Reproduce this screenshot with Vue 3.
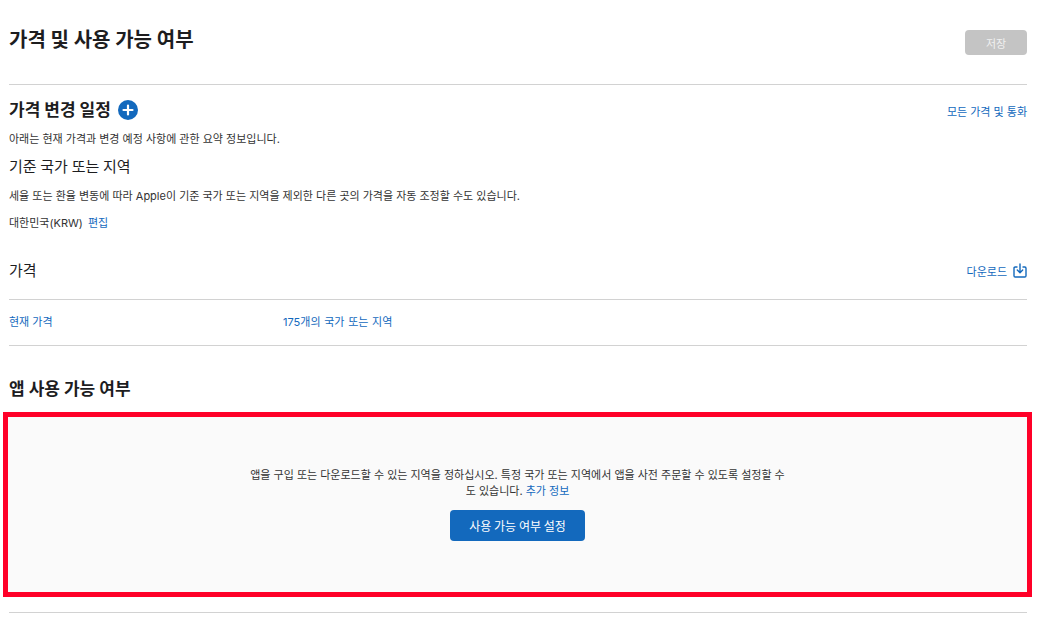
<script setup>
const blue = '#1369bd'
</script>

<template>
  <main class="page">
    <header class="top">
      <h1>가격 및 사용 가능 여부</h1>
      <button class="save" disabled>저장</button>
    </header>
    <section class="schedule">
      <div class="row">
        <h2>가격 변경 일정</h2>
        <svg class="plus" width="20" height="20" viewBox="0 0 20 20">
          <circle cx="10" cy="10" r="10" :fill="blue" />
          <path d="M10 5.500v9M5.500 10h9" stroke="#fff" stroke-width="2.200" stroke-linecap="round" />
        </svg>
        <a class="link push">모든 가격 및 통화</a>
      </div>
      <p class="intro">아래는 현재 가격과 변경 예정 사항에 관한 요약 정보입니다.</p>
      <h3>기준 국가 또는 지역</h3>
      <p class="note">세율 또는 환율 변동에 따라 Apple이 기준 국가 또는 지역을 제외한 다른 곳의 가격을 자동 조정할 수도 있습니다.</p>
      <p class="base">대한민국(KRW) <a class="link edit">편집</a></p>
    </section>
    <section class="prices">
      <div class="row price-head">
        <h3>가격</h3>
        <a class="link push">다운로드</a>
        <svg class="dl" width="14" height="15" viewBox="0 0 14 15" fill="none" :stroke="blue" stroke-width="1.400" stroke-linecap="round" stroke-linejoin="round">
          <path d="M4 4H2.200C1.500 4 1 4.500 1 5.200v7.600c0 .7.500 1.200 1.200 1.200h9.600c.7 0 1.200-.5 1.200-1.200V5.200C13 4.500 12.500 4 11.800 4H10" />
          <path d="M7 1v8.500M4.300 7 7 9.700 9.700 7" />
        </svg>
      </div>
      <div class="current">
        <a class="link col">현재 가격</a>
        <a class="link regions">175개의 국가 또는 지역</a>
      </div>
    </section>
    <h2 class="avail-title">앱 사용 가능 여부</h2>
    <section class="avail">
      <p>앱을 구입 또는 다운로드할 수 있는 지역을 정하십시오. 특정 국가 또는 지역에서 앱을 사전 주문할 수 있도록 설정할 수도 있습니다. <a class="link">추가 정보</a></p>
      <button class="setup">사용 가능 여부 설정</button>
    </section>
    <hr class="end" />
  </main>
</template>

<style scoped>
.page {
  box-sizing: border-box;
  width: 1037px;
  height: 624px;
  padding: 0 10px 0 9px;
  overflow: hidden;
  background: #fff;
  color: #333;
  font-family: Inter, "Noto Sans CJK KR", sans-serif;
  font-size: 11px;
}
h1, h2, h3, p { margin: 0; }
.top {
  display: flex;
  justify-content: space-between;
  height: 84px;
  border-bottom: 1px solid #d2d2d2;
}
h1 {
  margin-top: 25px;
  font-size: 20px;
  line-height: 30px;
  font-weight: 700;
  color: #1d1d1f;
}
.save {
  width: 62px;
  height: 25px;
  margin-top: 30px;
  border: 0;
  border-radius: 4px;
  background: #c4c4c4;
  color: #f0f0f0;
  font: inherit;
}
.row { display: flex; align-items: center; }
.push { margin-left: auto; }
.schedule { padding-top: 15px; }
h2 {
  font-size: 17px;
  line-height: 20px;
  font-weight: 700;
  color: #1d1d1f;
}
.plus { margin-left: 7px; }
.link { color: #1369bd; }
.schedule .link.push { padding-top: 2px; }
.intro { margin-top: 11px; line-height: 16px; }
h3 {
  font-size: 15px;
  line-height: 20px;
  font-weight: 400;
  word-spacing: -0.5px;
  color: #1d1d1f;
}
.schedule h3 { margin-top: 10px; }
.note { margin-top: 11px; line-height: 16px; }
.base { margin-top: 11px; line-height: 16px; }
.edit { margin-left: 2px; }
.prices { margin-top: 25px; }
.price-head { height: 29px; padding-bottom: 14px; border-bottom: 1px solid #d2d2d2; }
.dl { margin-left: 6px; }
.current {
  display: flex;
  height: 46px;
  padding-bottom: 3px;
  box-sizing: border-box;
  align-items: center;
  border-bottom: 1px solid #d2d2d2;
}
.col { width: 274px; }
.regions { word-spacing: 0.6px; }
.avail-title { margin-top: 33px; }
.avail {
  display: flex;
  flex-direction: column;
  align-items: center;
  box-sizing: border-box;
  height: 185px;
  margin: 13px -5px 0 -6px;
  padding-top: 50px;
  border: 5px solid #ff0028;
  background: #fafafa;
}
.avail p {
  width: 540px;
  line-height: 16px;
  text-align: center;
}
.setup {
  width: 135px;
  height: 31px;
  margin-top: 11px;
  border: 0;
  border-radius: 4px;
  background: #1369bd;
  color: #fff;
  font: inherit;
  font-size: 12px;
  word-spacing: -0.6px;
}
.end {
  margin: 15px 0 0;
  border: 0;
  border-top: 1px solid #d2d2d2;
}
</style>
